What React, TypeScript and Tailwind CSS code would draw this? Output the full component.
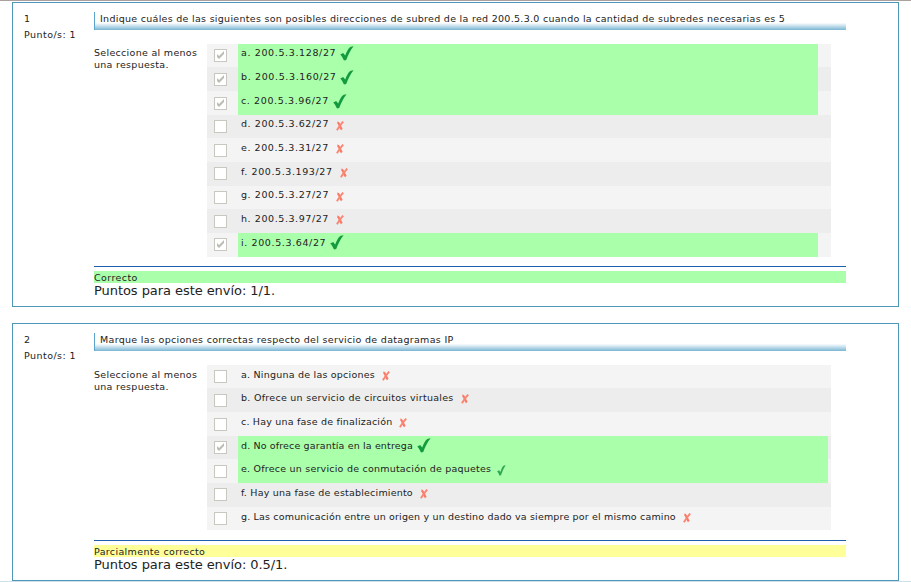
type Mark = "big" | "small" | "cross";

interface Option {
  text: string;
  width: string;
  tracking: string;
  mark: Mark;
  checked?: boolean;
}

interface Question {
  number: number;
  title: string;
  titleTracking: string;
  options: Option[];
  hintTop: string;
  optionTop: string;
  highlight: string;
  status: string;
  statusStyle: string;
  score: string;
  frame: string;
}

const questions: Question[] = [
  {
    number: 1,
    title:
      "Indique cuáles de las siguientes son posibles direcciones de subred de la red 200.5.3.0 cuando la cantidad de subredes necesarias es 5",
    titleTracking: "tracking-[0.29px]",
    hintTop: "pt-[3px]",
    optionTop: "mt-[3.7px]",
    highlight: "w-[580px]",
    status: "Correcto",
    statusStyle: "bg-[#aaffaa] tracking-[0.42px]",
    score: "1/1.",
    frame: "h-[305px] mt-px",
    options: [
      { text: "a. 200.5.3.128/27", width: "w-[99px]", tracking: "tracking-[0.63px]", mark: "big", checked: true },
      { text: "b. 200.5.3.160/27", width: "w-[99px]", tracking: "tracking-[0.63px]", mark: "big", checked: true },
      { text: "c. 200.5.3.96/27", width: "w-[92px]", tracking: "tracking-[0.62px]", mark: "big", checked: true },
      { text: "d. 200.5.3.62/27", width: "w-[95px]", tracking: "tracking-[0.58px]", mark: "cross" },
      { text: "e. 200.5.3.31/27", width: "w-[95px]", tracking: "tracking-[0.58px]", mark: "cross" },
      { text: "f. 200.5.3.193/27", width: "w-[99px]", tracking: "tracking-[0.6px]", mark: "cross" },
      { text: "g. 200.5.3.27/27", width: "w-[95px]", tracking: "tracking-[0.58px]", mark: "cross" },
      { text: "h. 200.5.3.97/27", width: "w-[95px]", tracking: "tracking-[0.58px]", mark: "cross" },
      { text: "i. 200.5.3.64/27", width: "w-[89px]", tracking: "tracking-[0.62px]", mark: "big", checked: true },
    ],
  },
  {
    number: 2,
    title: "Marque las opciones correctas respecto del servicio de datagramas IP",
    titleTracking: "tracking-[0.31px]",
    hintTop: "pt-[4px]",
    optionTop: "mt-[4px]",
    highlight: "w-[590px]",
    status: "Parcialmente correcto",
    statusStyle: "bg-[#ffff99] tracking-[0.35px]",
    score: "0.5/1.",
    frame: "h-[258px] mt-4",
    options: [
      { text: "a. Ninguna de las opciones", width: "w-[141px]", tracking: "tracking-[0.22px]", mark: "cross" },
      { text: "b. Ofrece un servicio de circuitos virtuales", width: "w-[220px]", tracking: "tracking-[0.28px]", mark: "cross" },
      { text: "c. Hay una fase de finalización", width: "w-[158px]", tracking: "tracking-[0.2px]", mark: "cross" },
      { text: "d. No ofrece garantía en la entrega", width: "w-[176px]", tracking: "tracking-[0.14px]", mark: "big", checked: true },
      { text: "e. Ofrece un servicio de conmutación de paquetes", width: "w-[256px]", tracking: "tracking-[0.22px]", mark: "small" },
      { text: "f. Hay una fase de establecimiento", width: "w-[179px]", tracking: "tracking-[0.2px]", mark: "cross" },
      { text: "g. Las comunicación entre un origen y un destino dado va siempre por el mismo camino", width: "w-[442px]", tracking: "tracking-[0.17px]", mark: "cross" },
    ],
  },
];

function MarkIcon({ mark }: { mark: Mark }) {
  if (mark === "cross") {
    return (
      <svg className="mt-[6px] h-[10px] w-[8px] shrink-0" viewBox="0 0 8 10">
        <path d="M1.4 1.4C3.4 1.8 4 6.4 5.8 8.4" fill="none" stroke="#fa7866" strokeWidth="2.2" />
        <path d="M7.2.6C5 3 3 6 .9 9.2" fill="none" stroke="#fa8672" strokeWidth="1.9" />
      </svg>
    );
  }
  const size = mark === "big" ? "mt-[2.5px] h-[15px] w-[14px]" : "mt-[5.5px] h-[11px] w-[9px]";
  return (
    <svg className={`${size} shrink-0`} viewBox="0 0 14 15" preserveAspectRatio="none">
      <path
        d="M.2 8.4 3.2 7 5.2 9.6C6.8 5.4 8.6 1.6 10.8.7L13.6.2C10.4 4 8.2 9 6.2 14L4 14.6C3 12.2 1.8 10 .2 8.4Z"
        fill={mark === "big" ? "#149b40" : "#30a855"}
      />
    </svg>
  );
}

function CheckBox({ checked }: { checked?: boolean }) {
  return (
    <span className="ml-[7px] mt-[5.5px] flex h-[13px] w-[13px] shrink-0 items-center justify-center border border-[#c9c8c0] bg-white">
      {checked && (
        <svg className="h-[9px] w-[9px]" viewBox="0 0 9 9">
          <path d="M1 3v3l2 2 5-5V0L3 5Z" fill="#bdbcb4" />
        </svg>
      )}
    </span>
  );
}

function QuestionPanel({ q }: { q: Question }) {
  return (
    <section className={`ml-3 flex w-[887px] border border-[#4f97b9] ${q.frame}`}>
      <div className="w-[81px] shrink-0 pl-[11px] pt-2 leading-4">
        <div>{q.number}</div>
        <div className="whitespace-nowrap tracking-[0.45px]">Punto/s: 1</div>
      </div>
      <div className="w-[752px] pt-[9px]">
        <h2
          className={`h-[18px] whitespace-nowrap border-l border-[#5ba4cb] bg-linear-to-b from-white from-60% to-[#7ab6d4] pl-[5px] leading-[14px] ${q.titleTracking}`}
        >
          {q.title}
        </h2>
        <div className="flex pt-[13.7px]">
          <div className={`w-[113px] shrink-0 leading-3 ${q.hintTop}`}>
            <div className="tracking-[0.3px]">Seleccione al menos</div>
            <div className="tracking-[0.28px]">una respuesta.</div>
          </div>
          <div className="w-[624px]">
            {q.options.map((o, i) => (
              <div key={o.text} className={`flex h-[23.67px] ${i % 2 ? "bg-[#ededed]" : "bg-[#f4f4f4]"}`}>
                <CheckBox checked={o.checked} />
                <div className={`ml-[11px] flex pl-[3px] ${o.mark === "cross" ? "" : "bg-[#aaffaa]"} ${q.highlight}`}>
                  <span className={`shrink-0 whitespace-nowrap leading-3 ${q.optionTop} ${o.width} ${o.tracking}`}>{o.text}</span>
                  <MarkIcon mark={o.mark} />
                </div>
              </div>
            ))}
          </div>
        </div>
        <div className="mt-[9.3px] h-px bg-[#1c5fae]" />
        <div className={`mt-1 h-3 pt-px leading-3 ${q.statusStyle}`}>{q.status}</div>
        <div className="text-[13px] leading-4 tracking-[-0.06px]">Puntos para este envío: {q.score}</div>
      </div>
    </section>
  );
}

export default function App() {
  return (
    <main className="flex h-[582px] w-[911px] flex-col overflow-hidden bg-white font-['DejaVu_Sans',sans-serif] text-[9.5px] text-[#222222]">
      <div className="h-px shrink-0 bg-[#aaa09e]" />
      {questions.map((q) => (
        <QuestionPanel key={q.number} q={q} />
      ))}
      <div className="h-px shrink-0 bg-[#cfe0e8]" />
    </main>
  );
}
